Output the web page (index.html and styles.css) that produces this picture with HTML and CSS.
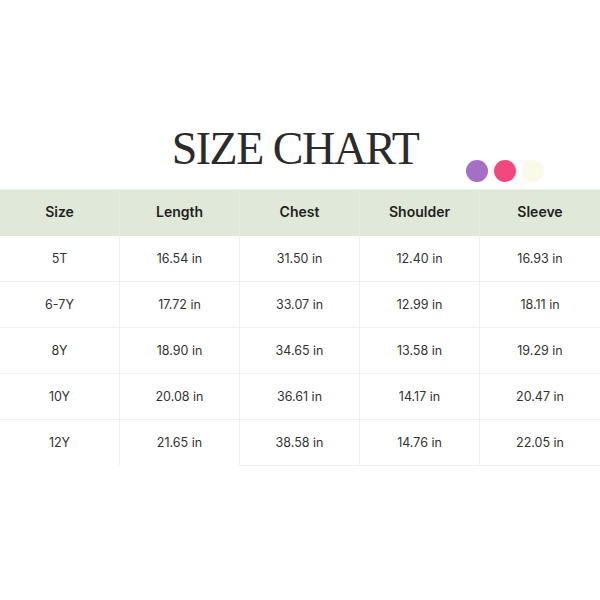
FILE: index.html
```html
<!DOCTYPE html>
<html>
<head>
<meta charset="utf-8">
<link rel="stylesheet" href="styles.css">
</head>
<body>
<div class="page">
  <header class="head">
    <h1 class="title">SIZE CHART</h1>
    <div class="swatches">
      <span class="dot purple"></span>
      <span class="dot pink"></span>
      <span class="dot cream"></span>
    </div>
  </header>
  <div class="table">
    <div class="cell th">Size</div>
    <div class="cell th">Length</div>
    <div class="cell th">Chest</div>
    <div class="cell th">Shoulder</div>
    <div class="cell th">Sleeve</div>

    <div class="cell">5T</div>
    <div class="cell">16.54 in</div>
    <div class="cell">31.50 in</div>
    <div class="cell">12.40 in</div>
    <div class="cell">16.93 in</div>

    <div class="cell">6-7Y</div>
    <div class="cell">17.72 in</div>
    <div class="cell">33.07 in</div>
    <div class="cell">12.99 in</div>
    <div class="cell">18.11 in</div>

    <div class="cell">8Y</div>
    <div class="cell">18.90 in</div>
    <div class="cell">34.65 in</div>
    <div class="cell">13.58 in</div>
    <div class="cell">19.29 in</div>

    <div class="cell">10Y</div>
    <div class="cell">20.08 in</div>
    <div class="cell">36.61 in</div>
    <div class="cell">14.17 in</div>
    <div class="cell">20.47 in</div>

    <div class="cell last nob">12Y</div>
    <div class="cell last nob">21.65 in</div>
    <div class="cell last">38.58 in</div>
    <div class="cell last">14.76 in</div>
    <div class="cell last">22.05 in</div>
  </div>
</div>
</body>
</html>
```
FILE: styles.css
```css
html, body {
  margin: 0;
  padding: 0;
  background: #ffffff;
}
.page {
  width: 600px;
  height: 600px;
  overflow: hidden;
}
.head {
  position: relative;
  height: 189px;
  display: flex;
  justify-content: center;
  align-items: flex-end;
}
.title {
  margin: 0 10px 17px 0;
  font-family: "Liberation Serif", "Times New Roman", serif;
  font-weight: 400;
  font-size: 46px;
  line-height: 46px;
  letter-spacing: -1.5px;
  color: #2b2b2b;
}
.swatches {
  position: absolute;
  left: 466px;
  top: 160px;
  display: flex;
  gap: 6px;
}
.dot {
  width: 22px;
  height: 22px;
  border-radius: 50%;
  display: block;
}
.purple { background: #a56fc6; }
.pink { background: #f3477f; }
.cream { background: #fbf9ea; }

.table {
  display: grid;
  grid-template-columns: repeat(5, 120px);
  grid-auto-rows: 46px;
  border-top: 1px solid #eef2ec;
}
.cell {
  display: flex;
  align-items: center;
  justify-content: center;
  font-family: Inter, "Liberation Sans", sans-serif;
  font-size: 12.5px;
  color: #333333;
  border-bottom: 1px solid #eff1ef;
  border-right: 1px solid #eff1ef;
  background: #fefffe;
}
.cell:nth-child(5n) {
  border-right: none;
}
.th {
  background: #dfe8d9;
  font-weight: 600;
  font-size: 14px;
  color: #1f1f1f;
  border-bottom: none;
  border-right-color: #e6ece2;
  padding-bottom: 4px;
}
.cell.nob {
  border-bottom-color: transparent;
  background: #ffffff;
}
```
